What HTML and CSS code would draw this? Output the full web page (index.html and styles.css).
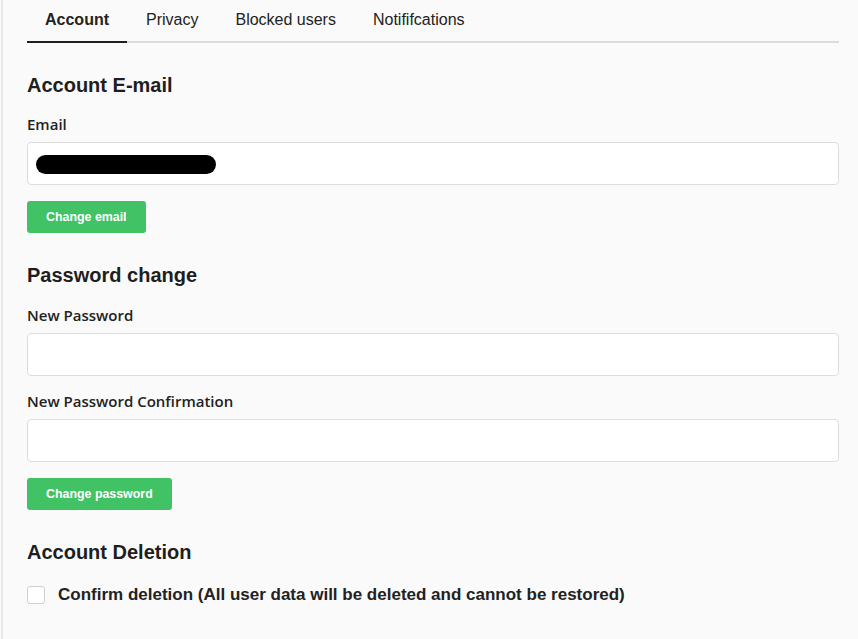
FILE: index.html
```html
<!DOCTYPE html>
<html lang="en">
<head>
    <meta charset="UTF-8">
    <meta name="viewport" content="width=device-width, initial-scale=1.0">
    <title>Settings</title>
    <link rel="stylesheet" href="styles.css">
</head>
<body>
    <div class="page">
        <!-- Tabs -->
        <nav class="tabs">
            <a class="tab active" href="#">Account</a>
            <a class="tab" href="#">Privacy</a>
            <a class="tab" href="#">Blocked users</a>
            <a class="tab" href="#">Notififcations</a>
        </nav>

        <!-- Email -->
        <section class="section">
            <h2>Account E-mail</h2>
            <label class="field-label" for="email">Email</label>
            <div class="input-wrap">
                <input type="text" id="email" class="text-input">
                <span class="redact"></span>
            </div>
            <button class="btn">Change email</button>
        </section>

        <!-- Password -->
        <section class="section">
            <h2>Password change</h2>
            <label class="field-label" for="newPassword">New Password</label>
            <input type="password" id="newPassword" class="text-input">
            <label class="field-label" for="newPasswordConfirm">New Password Confirmation</label>
            <input type="password" id="newPasswordConfirm" class="text-input">
            <button class="btn">Change password</button>
        </section>

        <!-- Deletion -->
        <section class="section">
            <h2>Account Deletion</h2>
            <label class="check-row">
                <span class="checkbox"></span>
                <span class="check-text">Confirm deletion (All user data will be deleted and cannot be restored)</span>
            </label>
        </section>
    </div>
</body>
</html>
```

FILE: styles.css
```css
body {
    margin: 0;
    background-color: #fafafa;
    font-family: "Liberation Sans", Arial, sans-serif;
    color: #222;
}

.page {
    min-height: 639px;
    box-sizing: border-box;
    border-left: 2px solid #e8e8e8;
    margin-left: 1px;
    padding: 0 19px 0 24px;
}

/* Tabs */
.tabs {
    display: flex;
    border-bottom: 2px solid #dcdcdc;
}

.tab {
    padding: 10px 18px 11px;
    line-height: 20px;
    font-size: 16px;
    color: #222;
    text-decoration: none;
    margin-bottom: -2px;
    border-bottom: 2px solid transparent;
}

.tab:not(:first-child) {
    padding-left: 19px;
}

.tab.active {
    font-weight: bold;
    border-bottom-color: #1e1e1e;
}

/* Sections */
.section {
    display: flex;
    flex-direction: column;
    align-items: flex-start;
}

.section h2 {
    margin: 30px 0 19px;
    font-size: 20px;
    line-height: 24px;
    font-weight: bold;
    color: #1e1e1e;
}

.section:first-of-type h2 {
    margin-bottom: 18px;
}

.field-label {
    font-family: "Open Sans", "Liberation Sans", sans-serif;
    font-size: 15px;
    font-weight: 600;
    line-height: 18px;
    margin-bottom: 9px;
}

.input-wrap {
    position: relative;
    align-self: stretch;
    display: flex;
    flex-direction: column;
}

.text-input {
    align-self: stretch;
    box-sizing: border-box;
    height: 43px;
    background: #fff;
    border: 1px solid #dddddd;
    border-radius: 4px;
    margin: 0 0 16px;
    padding: 0 10px;
    font-size: 15px;
}

.redact {
    position: absolute;
    left: 9px;
    top: 13px;
    width: 180px;
    height: 19px;
    background: #000;
    border-radius: 10px;
}

.btn {
    padding: 0 19px;
    height: 32px;
    background-color: #40c265;
    color: white;
    border: none;
    border-radius: 3px;
    font-family: "Liberation Sans", Arial, sans-serif;
    font-size: 12.4px;
    font-weight: bold;
    cursor: pointer;
}

.check-row {
    display: flex;
    align-items: center;
    gap: 13px;
    margin-top: 2px;
}

.checkbox {
    width: 16px;
    height: 16px;
    border: 1px solid #cfcfcf;
    border-radius: 3px;
    background: #fff;
}

.check-text {
    font-family: "Liberation Sans Narrow", "Liberation Sans", sans-serif;
    font-size: 17px;
    font-weight: bold;
    color: #222;
}
```
